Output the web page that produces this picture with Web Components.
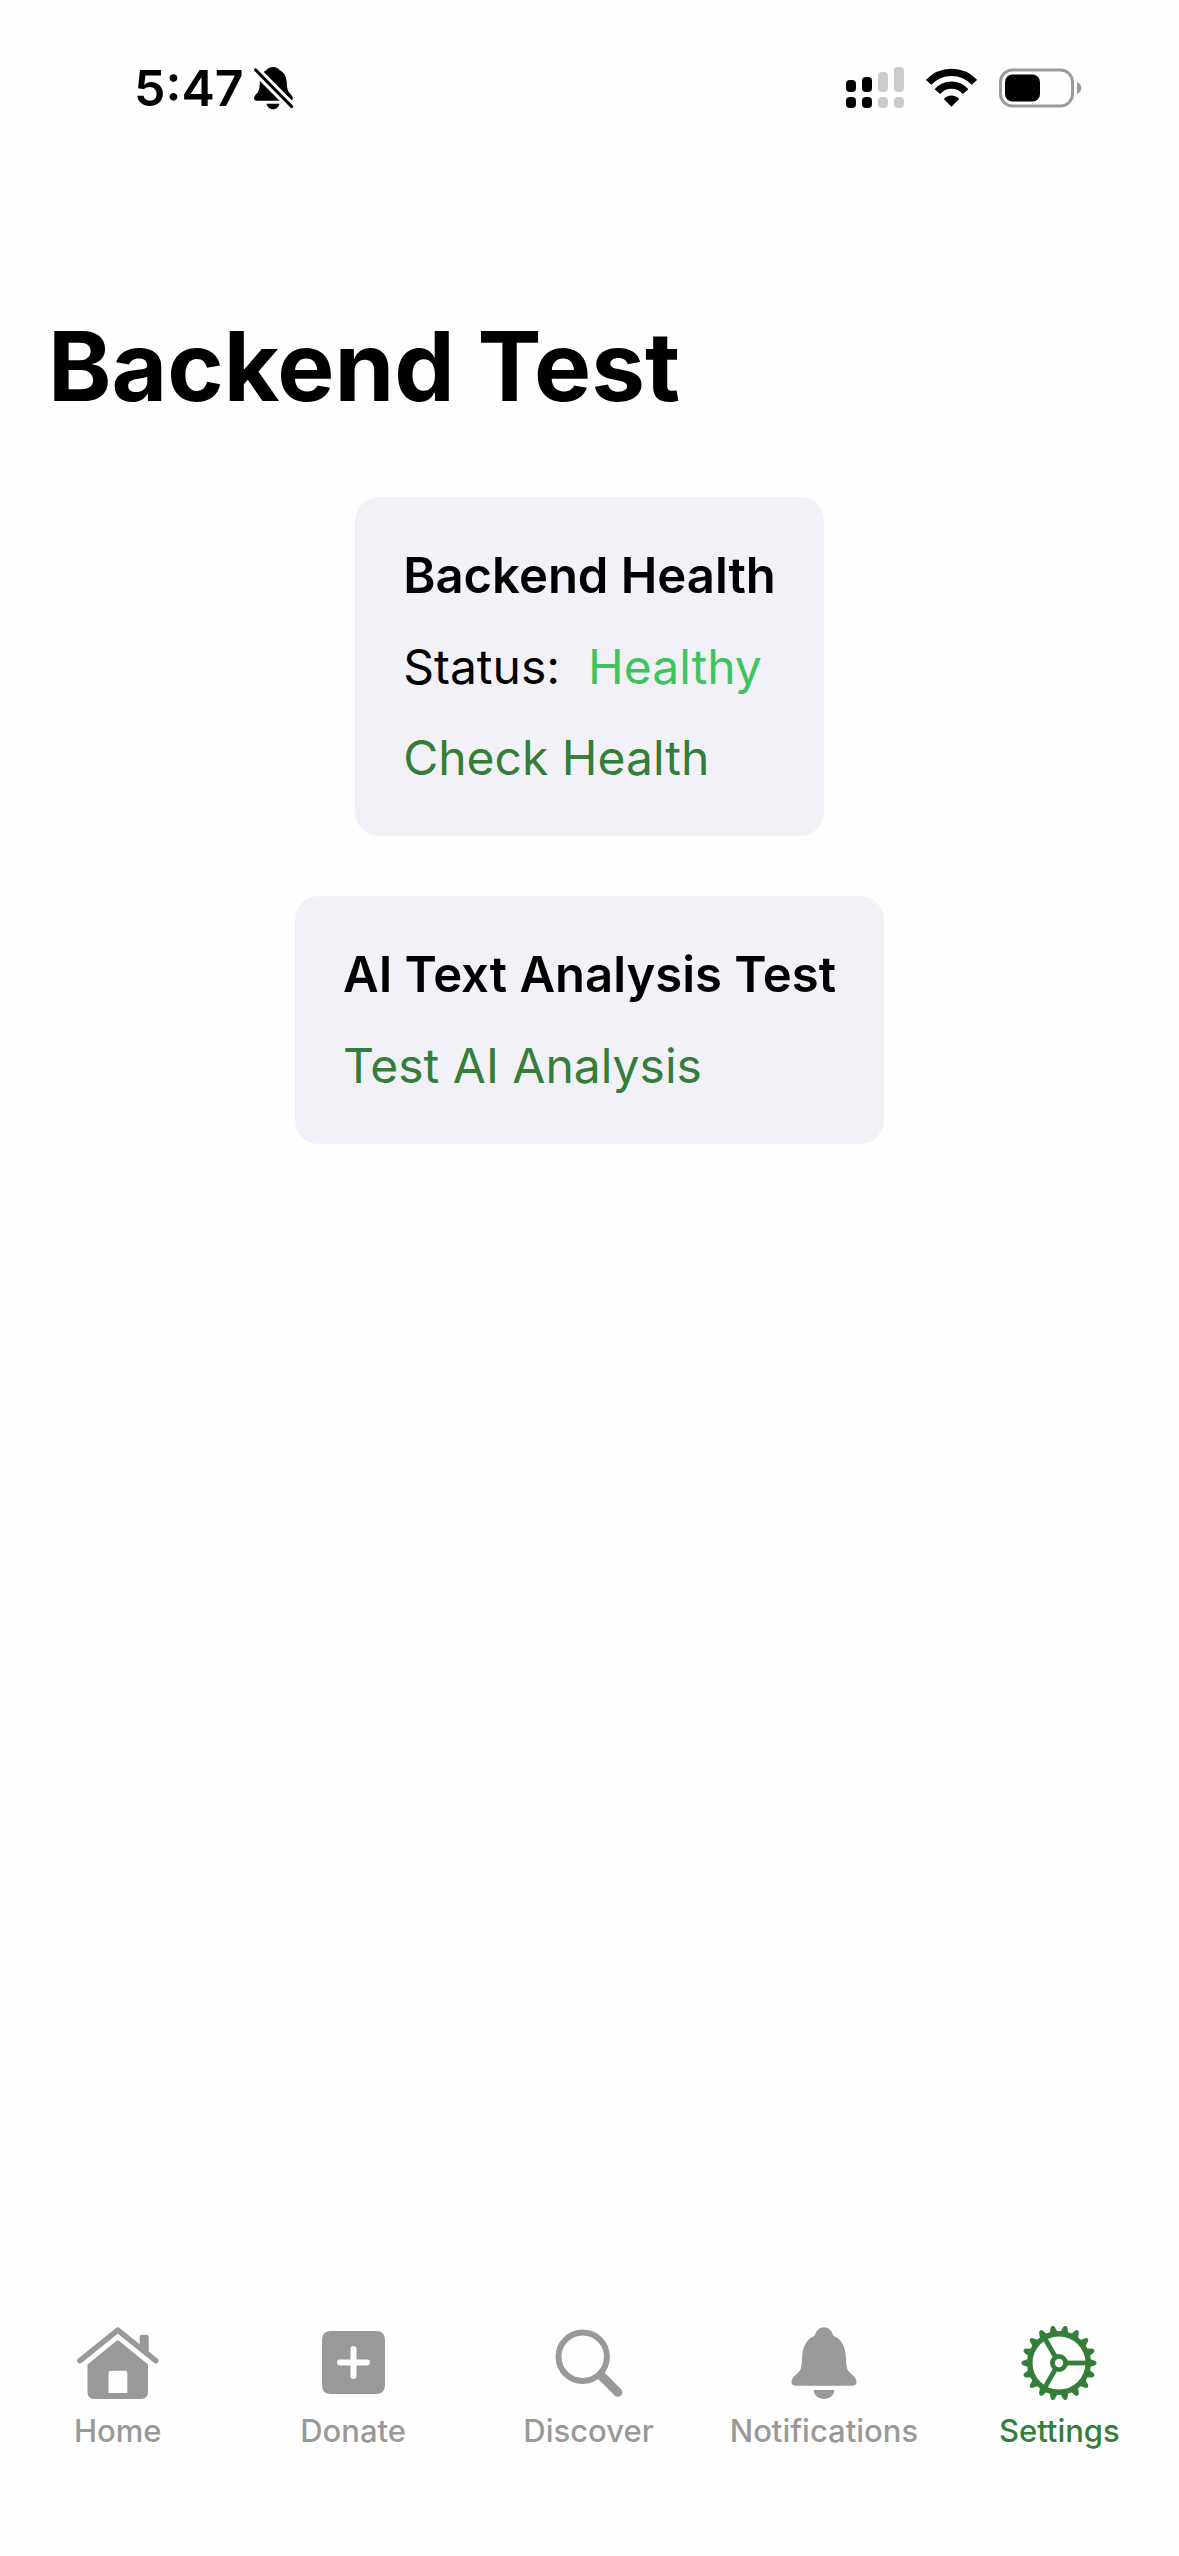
<!DOCTYPE html>
<html lang="en">
<head>
<meta charset="utf-8">
<meta name="viewport" content="width=device-width, initial-scale=1">
<title>Backend Test</title>
<style>
html, body { margin: 0; }
body { background: #fefefe; color: #000; font-family: Inter, "Liberation Sans", sans-serif; }
</style>
</head>
<body>
<app-screen>
  <status-bar slot="status" time="5:47"></status-bar>
  <page-title>Backend Test</page-title>
  <test-card heading="Backend Health">
    <status-row label="Status:">Healthy</status-row>
    <action-button>Check Health</action-button>
  </test-card>
  <test-card heading="AI Text Analysis Test">
    <action-button>Test AI Analysis</action-button>
  </test-card>
  <tab-bar slot="tabs">
    <tab-item icon="home">Home</tab-item>
    <tab-item icon="donate">Donate</tab-item>
    <tab-item icon="discover">Discover</tab-item>
    <tab-item icon="bell">Notifications</tab-item>
    <tab-item icon="gear" active>Settings</tab-item>
  </tab-bar>
</app-screen>
<script>
const define = (name, render) => customElements.define(name, class extends HTMLElement {
  connectedCallback() {
    if (!this.shadowRoot) this.attachShadow({ mode: "open" }).innerHTML = render(this);
  }
});

define("app-screen", () => `
<style>
:host { display: flex; flex-direction: column; min-height: 100vh; }
main { flex: 1; display: flex; flex-direction: column; align-items: center; gap: 60px; padding: 129px 48px 60px; }
</style>
<slot name="status"></slot>
<main><slot></slot></main>
<slot name="tabs"></slot>`);

define("status-bar", el => `
<style>
:host { display: flex; align-items: center; justify-content: space-between; padding: 0 97px 0 134px; height: 176px; box-sizing: border-box; }
.group { display: flex; align-items: center; }
.clock { gap: 10px; }
.system { gap: 22px; }
time { font-size: 50px; line-height: 60px; font-weight: 600; }
svg { display: block; }
</style>
<div class="group clock">
  <time>${el.getAttribute("time")}</time>
  <svg width="40" height="44" viewBox="0 0 40 44" role="img" aria-label="Silent mode">
    <path d="M12 4.500C13.500 2.200 16 1 19 1s5.500 1.200 7 3.500C30.500 6.500 32.500 11 32.800 17c.3 6 1 8 3 10.200 2 2.200 3 3.500 3 5 0 1.600-1 2.500-2.800 2.500H2.500C1 34.700 0 33.700 0 32.300c0-1.800 1.200-3 3-5 2-2.300 2.500-4.500 2.800-10.300C6 11 7.500 6.500 12 4.500Z"/>
    <path d="M12.500 37.700h13c-.8 3.400-3.300 5.500-6.500 5.500s-5.700-2.100-6.500-5.500Z"/>
    <path d="M-1 1.500 41 44" stroke="#fefefe" stroke-width="9"/>
    <path d="M1.700 4 37.600 40.500" stroke="#000" stroke-width="3.200" stroke-linecap="round"/>
  </svg>
</div>
<div class="group system">
  <svg width="58" height="42" viewBox="0 0 58 42" role="img" aria-label="Signal">
    <g><rect y="13" width="10" height="12" rx="4"/><rect y="30" width="10" height="11" rx="4"/>
    <rect x="16" y="10" width="10" height="15" rx="4"/><rect x="16" y="30" width="10" height="11" rx="4"/></g>
    <g fill="#cbcbcb"><rect x="32" y="5" width="10" height="20" rx="4"/><rect x="32" y="30" width="10" height="11" rx="4"/>
    <rect x="48" y="0" width="10" height="25" rx="4"/><rect x="48" y="30" width="10" height="11" rx="4"/></g>
  </svg>
  <svg width="51" height="40" viewBox="0 0 51 40" role="img" aria-label="Wi-Fi">
    <g fill="none" stroke="#000" stroke-width="7.300">
      <path d="M2.600 14.400A31 31 0 0 1 48.400 14.400"/>
      <path d="M11.400 23.600A18.500 18.500 0 0 1 39.600 23.600"/>
    </g>
    <path d="M17.800 31C21.500 26.300 29.500 26.300 33.200 31L25.500 38.700Z"/>
  </svg>
  <svg width="83" height="40" viewBox="0 0 83 40" role="img" aria-label="Battery">
    <rect x="1.500" y="2" width="72" height="36" rx="12" fill="none" stroke="#9b9b9b" stroke-width="3"/>
    <rect x="6" y="6.500" width="35" height="27" rx="7.500"/>
    <path d="M78 14c2.700 1 4.400 3.300 4.400 6s-1.700 5-4.400 6Z" fill="#9b9b9b"/>
  </svg>
</div>`);

define("page-title", () => `
<style>
:host { display: block; align-self: stretch; padding-bottom: 9px; }
h1 { margin: 0; font-size: 96px; line-height: 123px; font-weight: 700; }
</style>
<h1><slot></slot></h1>`);

define("test-card", el => `
<style>
:host { display: flex; flex-direction: column; align-items: flex-start; gap: 30px; padding: 48px; border-radius: 24px; background: #f2f1f8; }
h2 { margin: 0; font-size: 49px; line-height: 61px; font-weight: 600; }
</style>
<h2>${el.getAttribute("heading")}</h2>
<slot></slot>`);

define("status-row", el => `
<style>
:host { display: flex; gap: 28px; font-size: 48px; line-height: 61px; }
.value { color: #3dc45f; }
</style>
<span>${el.getAttribute("label")}</span><span class="value"><slot></slot></span>`);

define("action-button", () => `
<style>
:host { display: block; }
button { display: block; margin: 0; padding: 0; border: 0; background: none; color: #337e38; font: inherit; font-size: 48px; line-height: 61px; cursor: pointer; }
</style>
<button type="button"><slot></slot></button>`);

define("tab-bar", () => `
<style>
:host { display: block; padding: 0 2px 107px 0; }
nav { display: flex; }
</style>
<nav aria-label="Main"><slot></slot></nav>`);

const teeth = Array.from({ length: 18 }, (_, i) =>
  `<path transform="rotate(${i * 20} 42 38)" d="M71.500 33.500 78 35.800q1.600.7 1.600 2.200t-1.600 2.200L71.500 42.500Z"/>`).join("");
const spokes = [0, 120, 240].map(a =>
  `<path transform="rotate(${a} 42 38)" d="M49 35.600H70V40.400H49Z"/>`).join("");

const icons = {
  home: `<path d="M4 35.700 41.800 5.200 79.700 35.700" fill="none" stroke="currentColor" stroke-width="5.500" stroke-linecap="round" stroke-linejoin="round"/>
    <path d="M63.700 22V11.700q0-2 2-2h5q2 0 2 2V29.500Z"/>
    <path fill-rule="evenodd" d="M40.300 16q1.500-1.200 3 0L72 39.500V67q0 7-7 7H18.500q-7 0-7-7V39.500ZM34.500 45.700q-2 0-2 2V68h18.800V47.700q0-2-2-2Z"/>`,
  donate: `<path fill-rule="evenodd" d="M20 6H65Q74 6 74 15V60Q74 69 65 69H20Q11 69 11 60V15Q11 6 20 6ZM39.500 24V34.500H29a3 3 0 0 0 0 6H39.500V51a3 3 0 0 0 6 0V40.500H56a3 3 0 0 0 0-6H45.500V24a3 3 0 0 0-6 0Z"/>`,
  discover: `<g fill="none" stroke="currentColor"><circle cx="35.700" cy="31.800" r="24.200" stroke-width="6"/><path d="M54 50.500 70.800 67.300" stroke-width="9" stroke-linecap="round"/></g>`,
  bell: `<path d="M32.700 10.700C34.500 5.300 37.500 2.300 42 2.300s7.500 3 9.300 8.400C59.500 14 63 21 63.800 31c.6 8 .2 12.500 3.500 16 4.200 4 7.200 6.500 7.200 10 0 2.500-1.500 3.700-4.500 3.700H14c-3 0-4.500-1.200-4.500-3.700 0-3.500 3-6 7.200-10 3.300-3.500 2.900-8 3.500-16C21 21 24.500 14 32.700 10.700Z"/>
    <path d="M31.500 65h21C52 70.500 47.500 74 42 74S32 70.500 31.500 65Z"/>`,
  gear: `<circle cx="42" cy="38" r="29.200" fill="none" stroke="currentColor" stroke-width="5.500"/><circle cx="42" cy="38" r="6.600" fill="none" stroke="currentColor" stroke-width="4.800"/>${teeth}${spokes}`
};

define("tab-item", el => `
<style>
:host { display: block; flex: 1 1 0; min-width: 0; color: #999; }
:host([active]) { color: #337e38; }
a { display: flex; flex-direction: column; align-items: center; gap: 12px; color: inherit; text-decoration: none; font-size: 31px; line-height: 36px; font-weight: 500; }
svg { display: block; fill: currentColor; }
</style>
<a href="#${el.getAttribute("icon")}"${el.hasAttribute("active") ? ' aria-current="page"' : ""}>
  <svg width="84" height="76" viewBox="0 0 84 76" aria-hidden="true">${icons[el.getAttribute("icon")]}</svg>
  <span><slot></slot></span>
</a>`);
</script>
</body>
</html>
